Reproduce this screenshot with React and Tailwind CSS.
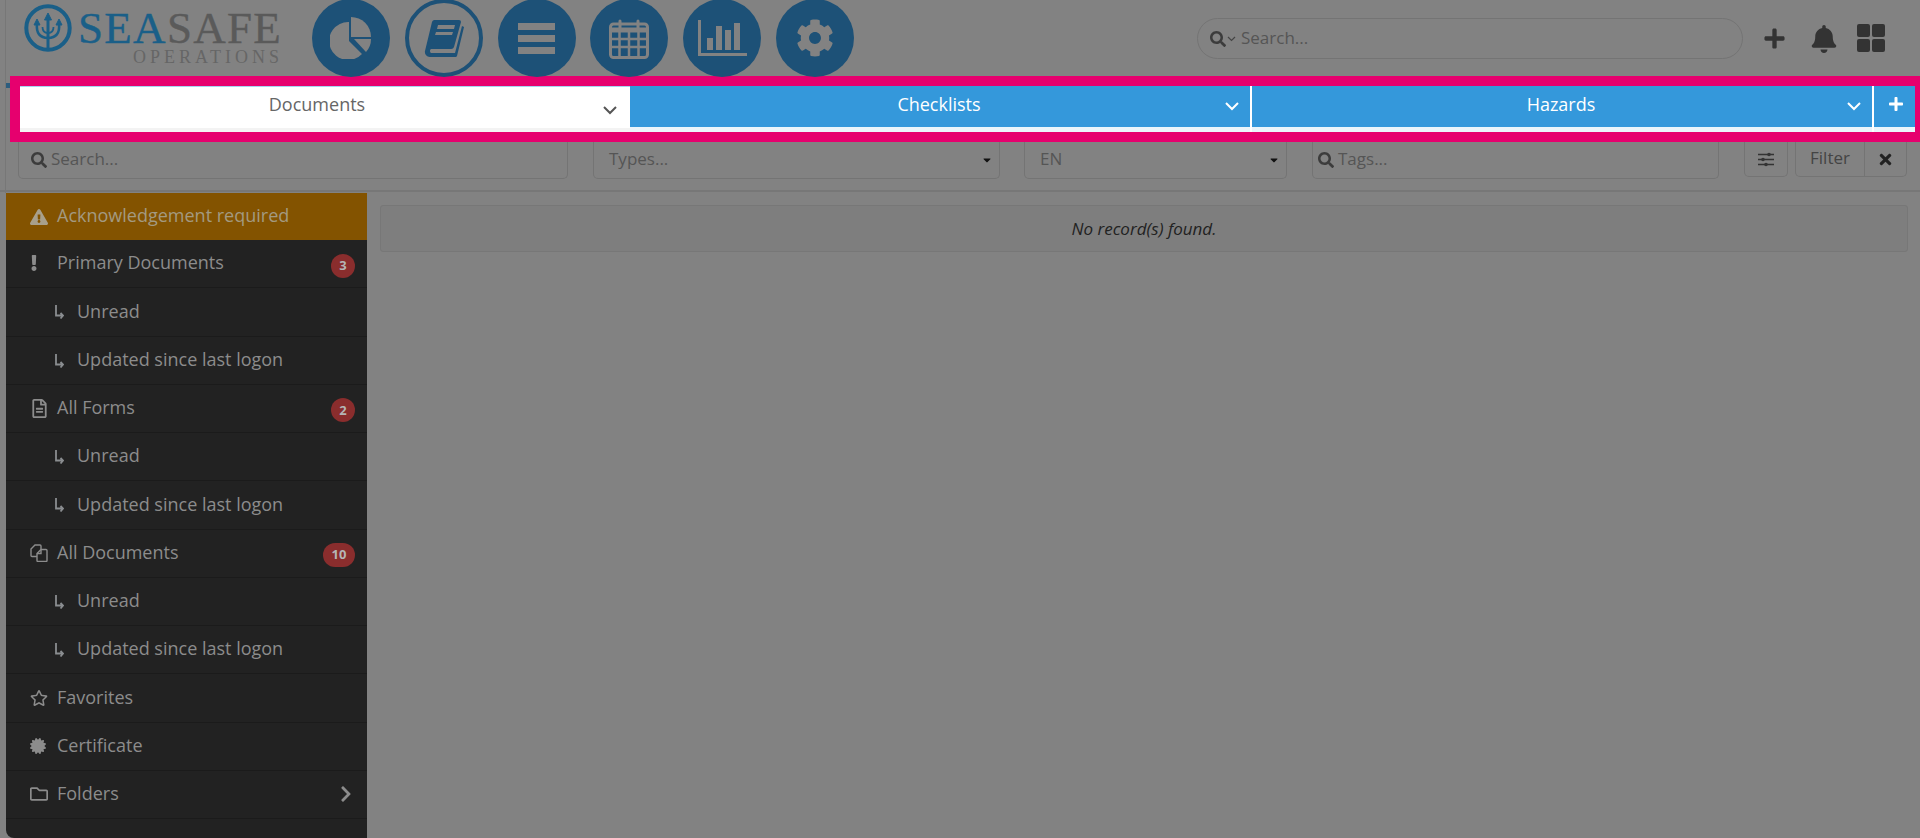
import React from "react";
import {
  FaBell,
  FaCaretDown,
  FaCertificate,
  FaChevronRight,
  FaCog,
  FaExclamation,
  FaExclamationTriangle,
  FaPlus,
  FaRegFileAlt,
  FaRegFolder,
  FaRegStar,
  FaSearch,
  FaTimes,
} from "react-icons/fa";

const font = "font-['Open_Sans','Liberation_Sans',sans-serif]";

function Trident() {
  return (
    <svg width="48" height="48" viewBox="0 0 48 48" fill="none" stroke="#1a5f88">
      <circle cx="24" cy="24" r="21.700" strokeWidth="4" />
      <path d="M24 13v32" strokeWidth="3" />
      <path d="M13 20c-1 9 3 14 11 14s12-5 11-14" strokeWidth="2.600" />
      <path d="M18.500 23c0 4 2 6 5.500 6s5.500-2 5.500-6" strokeWidth="1.800" />
      <path d="M24 9l-3.500 7h7zM13 15l-3 6h6zM35 15l-3 6h6z" fill="#1a5f88" strokeWidth="1" />
    </svg>
  );
}

function PieIcon() {
  return (
    <svg width="42" height="42" viewBox="0 0 42 42" fill="#828282">
      <path d="M19 5v19l13 13a19 19 0 1 1-13-32z" />
      <path d="M21 0a20 20 0 0 1 20 20H21z" />
      <path d="M24 22h17a19 19 0 0 1-5 13z" />
    </svg>
  );
}

function BookIcon() {
  return (
    <svg width="40" height="38" viewBox="0 0 40 38" fill="#1d5177">
      <path d="M10 1h25a2 2 0 0 1 2 2l-7 25a3 3 0 0 1-3 2H7a2.500 2.500 0 0 0 0 4h24l7-27 2 1-7 29a2 2 0 0 1-2 1H6a5 5 0 0 1-5-6l7-29a3 3 0 0 1 2-2z" />
      <path d="M14 6h17l-1 4H13zM12 13h17l-1 3H11z" fill="#828282" />
    </svg>
  );
}

function MenuIcon() {
  return (
    <svg width="37" height="31" viewBox="0 0 37 31" fill="#828282">
      <path d="M0 0h37v7H0zM0 12h37v7H0zM0 24h37v7H0z" />
    </svg>
  );
}

function CalendarIcon() {
  return (
    <svg width="40" height="41" viewBox="0 0 40 41" fill="none" stroke="#828282">
      <rect x="1.500" y="6" width="37" height="33.500" rx="3" strokeWidth="3" />
      <path d="M1 12h38" strokeWidth="5" />
      <path d="M11 10V3M29 10V3" strokeWidth="3" strokeLinecap="round" />
      <path d="M10.500 14v24M20 14v24M29.500 14v24M2 21h36M2 29h36" strokeWidth="2.500" />
    </svg>
  );
}

function BarsIcon() {
  return (
    <svg width="49" height="36" viewBox="0 0 49 36" fill="#828282">
      <path d="M0 0h3v33h46v3H0z" />
      <path d="M9 18h6v12H9zM18 6h6v24h-6zM27 10h6v20h-6zM36 3h6v27h-6z" />
    </svg>
  );
}

function SubArrow() {
  return (
    <svg width="9" height="15" viewBox="0 0 9 15" fill="none" stroke="#8a8d90" strokeWidth="1.800" className="mt-[2px] shrink-0">
      <path d="M1 0v10.500h7M5.500 8l2.500 2.500L5.500 13.500" />
    </svg>
  );
}

function CopyIcon() {
  return (
    <svg width="18" height="18" viewBox="0 0 18 18" fill="none" stroke="#8c8c8c" strokeWidth="1.400">
      <path d="M7 12.500H2a1 1 0 0 1-1-1V5l4-4h5a1 1 0 0 1 1 1v3" />
      <path d="M11 5.500h5a1 1 0 0 1 1 1v10a1 1 0 0 1-1 1H8a1 1 0 0 1-1-1V9.500z" />
      <path d="M11 5.500v4H7" />
    </svg>
  );
}

function SlidersIcon() {
  return (
    <svg width="16" height="15" viewBox="0 0 16 15" fill="none" stroke="#333" strokeWidth="1.300">
      <path d="M0 2.500h16M0 7.500h16M0 12.500h16" />
      <circle cx="11" cy="2.500" r="1.800" fill="#333" stroke="none" />
      <circle cx="5" cy="7.500" r="1.800" fill="#333" stroke="none" />
      <circle cx="8" cy="12.500" r="1.800" fill="#333" stroke="none" />
    </svg>
  );
}

function GridIcon() {
  return (
    <div className="grid grid-cols-2 gap-[2px]">
      <div className="w-[13px] h-[13px] rounded-[2px] bg-[#333]" />
      <div className="w-[13px] h-[13px] rounded-[2px] bg-[#333]" />
      <div className="w-[13px] h-[13px] rounded-[2px] bg-[#333]" />
      <div className="w-[13px] h-[13px] rounded-[2px] bg-[#333]" />
    </div>
  );
}

function NavCircle({ outlined, children }) {
  return (
    <div
      className={
        outlined
          ? "w-[78px] h-[78px] rounded-full border-[4px] border-[#1d5177] flex items-center justify-center shrink-0"
          : "w-[78px] h-[78px] rounded-full bg-[#1d5177] flex items-center justify-center shrink-0"
      }
    >
      {children}
    </div>
  );
}

function Tab({ label, active }) {
  return (
    <div
      className={
        active
          ? "relative w-[610px] h-full flex flex-col bg-white border-t border-[#a8d3ee]"
          : "relative flex-1 h-full flex flex-col"
      }
    >
      <div className={active ? "h-[41px] flex items-center justify-center pr-[16px] text-[#666]" : "h-[41px] flex items-center justify-center pr-[2px] text-white bg-[#3498db]"}>
        <span className={active ? "text-[18px] -mt-[6px]" : "text-[18px] -mt-[5px]"}>{label}</span>
      </div>
      <div className={active ? "flex-1 bg-[#f3f3f3]" : "flex-1 bg-[#eaf5fb]"} />
      <svg
        width="14"
        height="9"
        viewBox="0 0 14 9"
        fill="none"
        stroke={active ? "#555" : "#fff"}
        strokeWidth="2"
        className={active ? "absolute right-[13px] top-[19px]" : "absolute right-[11px] top-[16px]"}
      >
        <path d="M1 1l6 6 6-6" />
      </svg>
    </div>
  );
}

function FilterBox({ className, icon, label, caret }) {
  return (
    <div className={`${className} h-[37px] flex items-center pr-[6px] gap-[4px] border border-t-0 border-[#747474] rounded-b-[5px] text-[#555] text-[17px]`}>
      {icon && <FaSearch className="text-[#3c3c3c] text-[16px] shrink-0" />}
      <span className="-mt-[2px] flex-1">{label}</span>
      {caret && <FaCaretDown className="text-[#111] text-[12px]" />}
    </div>
  );
}

function Badge({ children, wide }) {
  return (
    <span className={wide ? "ml-auto mt-[4px] w-[32px] h-[24px] rounded-full bg-[#8a2d2d] text-[#b5b5b5] text-[13px] font-bold flex items-center justify-center" : "ml-auto mt-[4px] w-[24px] h-[24px] rounded-full bg-[#8a2d2d] text-[#b5b5b5] text-[13px] font-bold flex items-center justify-center"}>
      {children}
    </span>
  );
}

function SideRow({ icon, children, right }) {
  return (
    <div className="h-[48.25px] flex items-center pl-[24px] pr-[12px] border-b border-[#1b1b1b] text-[#8c8c8c] text-[18px]">
      <span className="w-[27px] shrink-0 flex items-center">{icon}</span>
      <span className="-mt-[1.5px]">{children}</span>
      {right}
    </div>
  );
}

function SubRow({ children }) {
  return (
    <div className="h-[48.25px] flex items-center pl-[49px] border-b border-[#1b1b1b] text-[#8c8c8c] text-[18px]">
      <SubArrow />
      <span className="ml-[13px] -mt-[1.5px]">{children}</span>
    </div>
  );
}

export default function App() {
  return (
    <div className={`${font} relative w-[1920px] h-[838px] overflow-hidden bg-[#828282] flex flex-col`}>
      {/* page edge + stray dot left of the highlight */}
      <div className="absolute left-[5px] top-0 w-px h-[193px] bg-[#777]" />
      <div className="absolute left-[6px] top-[83px] w-[4px] h-[5px] bg-[#2c5d7e]" />

      {/* Header */}
      <header className="h-[76px] shrink-0 flex items-start relative">
        <div className="w-[78px] pl-[24px] pt-[4px] shrink-0">
          <Trident />
        </div>
        <div className="w-[234px] shrink-0 font-['Liberation_Serif',serif]">
          <div className="text-[45px] leading-[40px] mt-[8px] tracking-[1.3px] text-[#1a5f88] h-[40px] [-webkit-text-stroke:0.4px_currentColor]">
            SEA<span className="text-[#5a5a5a]">SAFE</span>
          </div>
          <div className="text-[18px] leading-[16px] mt-[1px] tracking-[4px] text-[#666] pl-[55px]">OPERATIONS</div>
        </div>
        <nav className="flex gap-[14.8px] -mt-[1px]">
          <NavCircle><PieIcon /></NavCircle>
          <NavCircle outlined><BookIcon /></NavCircle>
          <NavCircle><MenuIcon /></NavCircle>
          <NavCircle><CalendarIcon /></NavCircle>
          <NavCircle><BarsIcon /></NavCircle>
          <NavCircle><FaCog className="text-[#828282] text-[38px]" /></NavCircle>
        </nav>
        <div className="ml-auto flex items-center mt-[18px] pr-[35px]">
          <div className="w-[546px] h-[41px] rounded-full border border-[#747474] flex items-center pl-[12px] text-[#555] text-[17px]">
            <FaSearch className="text-[#3c3c3c] text-[16px]" />
            <svg width="9" height="6" viewBox="0 0 9 6" fill="none" stroke="#444" strokeWidth="1.200" className="ml-[1px] mr-[5px]">
              <path d="M1 1l3.500 3.500L8 1" />
            </svg>
            <span className="-mt-[2px]">Search...</span>
          </div>
          <FaPlus className="text-[#333] text-[23px] ml-[20px]" />
          <FaBell className="text-[#333] text-[28px] ml-[24px]" />
          <div className="ml-[19px] -mt-[2px]"><GridIcon /></div>
        </div>
      </header>

      {/* Highlighted tabs */}
      <div className="ml-[10px] h-[66px] shrink-0 bg-[#e6006e] pl-[10px] pr-[5px] pt-[10px] pb-[10px]">
        <div className="h-full flex bg-white">
          <Tab label="Documents" active />
          <Tab label="Checklists" />
          <div className="w-[2px] bg-white shrink-0" />
          <Tab label="Hazards" />
          <div className="w-[2px] bg-white shrink-0" />
          <div className="w-[41px] h-full flex flex-col shrink-0">
            <div className="h-[41px] bg-[#3498db] flex items-center justify-center pl-[3px]">
              <FaPlus className="text-white text-[16px] -mt-[5px]" />
            </div>
            <div className="flex-1 bg-[#eaf5fb]" />
          </div>
        </div>
      </div>

      {/* Filters */}
      <div className="h-[50px] shrink-0 flex pl-[18px] border-b-2 border-[#777] pb-[13px]">
        <FilterBox className="w-[550px] pl-[12px]" icon label="Search..." />
        <FilterBox className="w-[407px] ml-[25px] pl-[15px]" label="Types..." caret />
        <FilterBox className="w-[263px] ml-[24px] pl-[15px]" label="EN" caret />
        <FilterBox className="w-[407px] ml-[25px] pl-[5px]" icon label="Tags..." />
        <div className="w-[44px] ml-[25px] flex items-center justify-center border border-t-0 border-[#747474] rounded-b-[5px]">
          <SlidersIcon />
        </div>
        <div className="w-[112px] ml-[7px] flex border border-t-0 border-[#747474] rounded-b-[5px]">
          <div className="w-[69px] flex items-center justify-center border-r border-[#747474] text-[#444] text-[17px]">
            <span className="-mt-[2px]">Filter</span>
          </div>
          <div className="flex-1 flex items-center justify-center">
            <FaTimes className="text-[#222] text-[17px]" />
          </div>
        </div>
      </div>

      {/* Body */}
      <div className="flex-1 flex min-h-0 pt-[1px]">
        <aside className="ml-[6px] w-[361px] shrink-0 bg-[#222] rounded-bl-[8px]">
          <div className="h-[47px] flex items-center pl-[24px] bg-[#835300] text-[#a39a80] text-[18px]">
            <FaExclamationTriangle className="w-[18px] h-[16px] mr-[9px] text-[#a8a08c]" />
            <span className="-mt-[3px]">Acknowledgement required</span>
          </div>
          <SideRow icon={<FaExclamation className="text-[#8c8c8c] text-[16px] -ml-[4px] -mt-[2px]" />} right={<Badge>3</Badge>}>Primary Documents</SideRow>
          <SubRow>Unread</SubRow>
          <SubRow>Updated since last logon</SubRow>
          <SideRow icon={<FaRegFileAlt className="text-[#8c8c8c] text-[19px]" />} right={<Badge>2</Badge>}>All Forms</SideRow>
          <SubRow>Unread</SubRow>
          <SubRow>Updated since last logon</SubRow>
          <SideRow icon={<CopyIcon />} right={<Badge wide>10</Badge>}>All Documents</SideRow>
          <SubRow>Unread</SubRow>
          <SubRow>Updated since last logon</SubRow>
          <SideRow icon={<FaRegStar className="text-[#8c8c8c] text-[18px]" />}>Favorites</SideRow>
          <SideRow icon={<FaCertificate className="text-[#8c8c8c] text-[16px]" />}>Certificate</SideRow>
          <SideRow
            icon={<FaRegFolder className="text-[#8c8c8c] text-[18px]" />}
            right={<FaChevronRight className="ml-auto text-[#8c8c8c] text-[18px]" />}
          >
            Folders
          </SideRow>
        </aside>
        <main className="flex-1 pl-[13px] pr-[12px] pt-[12px]">
          <div className="h-[47px] flex items-center justify-center rounded-[3px] border border-[#777] bg-[#7e7e7e] text-[#222] text-[17px] italic">
            No record(s) found.
          </div>
        </main>
      </div>
    </div>
  );
}
